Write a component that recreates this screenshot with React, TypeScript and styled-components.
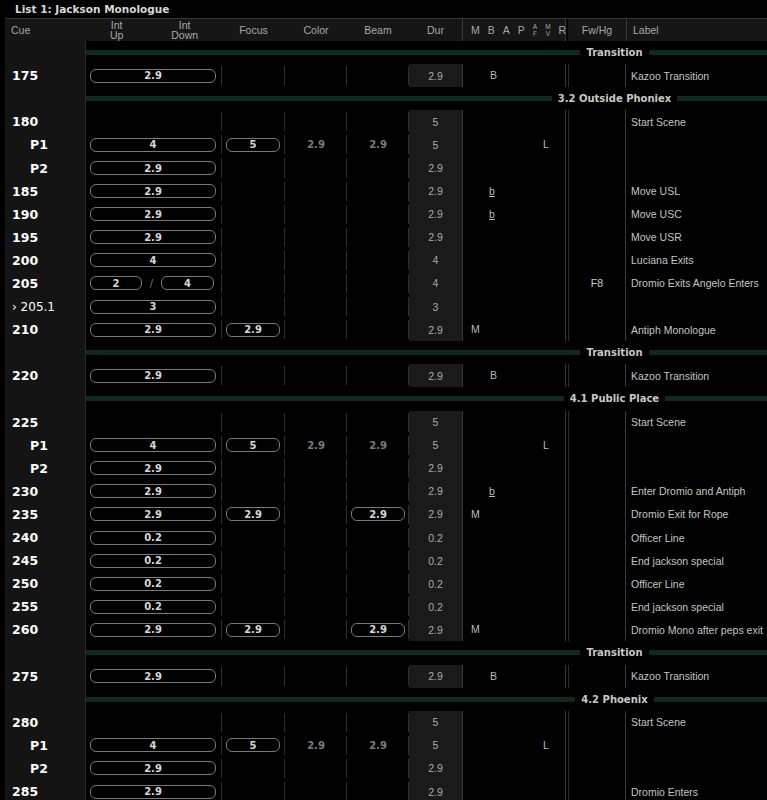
import React from "react";
import styled, { createGlobalStyle } from "styled-components";

const Global = createGlobalStyle`
  html, body { margin: 0; background: #000; }
  body { font-family: "DejaVu Sans", "Noto Sans", sans-serif; color: #ccc; }
`;

const COLS = "81px 136px 63px 62px 62px 53px 106px 58px 1fr";
const SANS = `"Liberation Sans", Arial, sans-serif`;

const Page = styled.div`
  width: 767px; height: 800px; overflow: hidden; background: #000;
`;
const Title = styled.div`
  height: 18px; padding-left: 15px; font-size: 10.5px; font-weight: bold; color: #d8d8d8;
  display: flex; align-items: center;
`;
const Table = styled.div`
  margin-left: 5px; border-top: 1px solid #333;
`;
const Row = styled.div<{ $h?: number }>`
  display: grid; grid-template-columns: ${COLS}; height: ${p => p.$h ?? 23.1}px;
`;
const HeadCell = styled.div<{ $left?: boolean; $line?: boolean }>`
  background: #161616; color: #a8a8a8; font-size: 10.5px; line-height: 10px; font-family: ${SANS};
  display: flex; align-items: center; justify-content: ${p => (p.$left ? "flex-start" : "center")};
  text-align: center; padding-left: ${p => (p.$left ? "6px" : "0")};
  border-left: ${p => (p.$line ? "1px solid #3a3a3a" : "none")};
`;
const CueCell = styled.div<{ $sub?: boolean; $plain?: boolean }>`
  background: #141414; border-right: 1px solid #2a2a2a; color: #fff;
  font-size: ${p => (p.$plain ? "12px" : "12.5px")}; font-weight: ${p => (p.$plain ? "normal" : "bold")};
  display: flex; align-items: center; padding-left: ${p => (p.$sub ? "25px" : "7px")};
`;
const Cell = styled.div<{ $sep?: boolean }>`
  display: flex; align-items: center; position: relative; padding: 0 4px;
  &::after {
    content: ""; display: ${p => (p.$sep ? "block" : "none")}; position: absolute; right: 0; top: 2px; bottom: 2px;
    border-right: 1px solid #2f2f2f;
  }
`;
const DurCell = styled.div`
  background: #1a1a1a; color: #aaa; font-size: 10.5px; font-family: ${SANS};
  display: flex; align-items: center; justify-content: center;
`;
const FlagCell = styled.div`
  border-left: 1px solid #3a3a3a; border-right: 1px solid #3a3a3a; margin-right: 2px;
  position: relative; color: #bbb; font-size: 10.5px; font-family: ${SANS};
`;
const Flag = styled.span<{ $x: number; $u?: boolean }>`
  position: absolute; left: ${p => p.$x}px; top: 5px; text-decoration: ${p => (p.$u ? "underline" : "none")};
`;
const FwCell = styled.div`
  border-left: 1px solid #2a2a2a; border-right: 1px solid #3a3a3a; color: #ccc; font-size: 10.5px; font-family: ${SANS};
  display: flex; align-items: center; justify-content: center;
`;
const LabelCell = styled.div`
  color: #c4c4c4; font-size: 10.5px; font-family: ${SANS}; white-space: nowrap; overflow: hidden;
  display: flex; align-items: center; padding-left: 5px;
`;
const Pill = styled.div<{ $w: string }>`
  width: ${p => p.$w}; height: 14px; border: 1px solid #7a7a7a; border-radius: 6px; box-sizing: border-box;
  color: #d8d8d8; font-size: 10px; font-weight: bold; display: flex; align-items: center; justify-content: center;
`;
const Slash = styled.span`
  color: #777; font-size: 10px; flex: 1; text-align: center;
`;
const Plain = styled.div`
  width: 100%; text-align: center; color: #7c7c7c; font-size: 10px; font-weight: bold;
`;
const SectionBar = styled.div`
  grid-column: 2 / 7; display: flex; align-items: center;
`;
const SectionRight = styled.div`
  grid-column: 7 / 10; display: flex; align-items: center; gap: 6px;
`;
const Bar = styled.div`
  flex: 1; height: 5px; background: #0e2a1d;
`;
const SecText = styled.span`
  color: #c8c8c8; font-size: 10px; font-weight: bold; white-space: nowrap;
`;

type Cue = {
  cue: string; sub?: boolean; plain?: boolean;
  up?: string; split?: [string, string]; focus?: string; color?: string; beam?: string; beamPill?: string;
  dur: string; flags?: { t: string; x: number; u?: boolean }[]; fw?: string; label?: string;
};
type Item = Cue | { section: string };

const B = [{ t: "B", x: 27 }];
const M = [{ t: "M", x: 8 }];
const L = [{ t: "L", x: 80 }];
const b = [{ t: "b", x: 26, u: true }];

const items: Item[] = [
  { section: "Transition" },
  { cue: "175", up: "2.9", dur: "2.9", flags: B, label: "Kazoo Transition" },
  { section: "3.2 Outside Phoniex" },
  { cue: "180", dur: "5", label: "Start Scene" },
  { cue: "P1", sub: true, up: "4", focus: "5", color: "2.9", beam: "2.9", dur: "5", flags: L },
  { cue: "P2", sub: true, up: "2.9", dur: "2.9" },
  { cue: "185", up: "2.9", dur: "2.9", flags: b, label: "Move USL" },
  { cue: "190", up: "2.9", dur: "2.9", flags: b, label: "Move USC" },
  { cue: "195", up: "2.9", dur: "2.9", label: "Move USR" },
  { cue: "200", up: "4", dur: "4", label: "Luciana Exits" },
  { cue: "205", split: ["2", "4"], dur: "4", fw: "F8", label: "Dromio Exits Angelo Enters" },
  { cue: "› 205.1", plain: true, up: "3", dur: "3" },
  { cue: "210", up: "2.9", focus: "2.9", dur: "2.9", flags: M, label: "Antiph Monologue" },
  { section: "Transition" },
  { cue: "220", up: "2.9", dur: "2.9", flags: B, label: "Kazoo Transition" },
  { section: "4.1 Public Place" },
  { cue: "225", dur: "5", label: "Start Scene" },
  { cue: "P1", sub: true, up: "4", focus: "5", color: "2.9", beam: "2.9", dur: "5", flags: L },
  { cue: "P2", sub: true, up: "2.9", dur: "2.9" },
  { cue: "230", up: "2.9", dur: "2.9", flags: b, label: "Enter Dromio and Antiph" },
  { cue: "235", up: "2.9", focus: "2.9", beamPill: "2.9", dur: "2.9", flags: M, label: "Dromio Exit for Rope" },
  { cue: "240", up: "0.2", dur: "0.2", label: "Officer Line" },
  { cue: "245", up: "0.2", dur: "0.2", label: "End jackson special" },
  { cue: "250", up: "0.2", dur: "0.2", label: "Officer Line" },
  { cue: "255", up: "0.2", dur: "0.2", label: "End jackson special" },
  { cue: "260", up: "2.9", focus: "2.9", beamPill: "2.9", dur: "2.9", flags: M, label: "Dromio Mono after peps exit" },
  { section: "Transition" },
  { cue: "275", up: "2.9", dur: "2.9", flags: B, label: "Kazoo Transition" },
  { section: "4.2 Phoenix" },
  { cue: "280", dur: "5", label: "Start Scene" },
  { cue: "P1", sub: true, up: "4", focus: "5", color: "2.9", beam: "2.9", dur: "5", flags: L },
  { cue: "P2", sub: true, up: "2.9", dur: "2.9" },
  { cue: "285", up: "2.9", dur: "2.9", label: "Dromio Enters" },
];

const CueRow = ({ c }: { c: Cue }) => (
  <Row>
    <CueCell $sub={c.sub} $plain={c.plain}>{c.cue}</CueCell>
    <Cell $sep>
      {c.up && <Pill $w="126px">{c.up}</Pill>}
      {c.split && (<><Pill $w="52px">{c.split[0]}</Pill><Slash>/</Slash><Pill $w="53px">{c.split[1]}</Pill><span style={{ width: 4 }} /></>)}
    </Cell>
    <Cell $sep>{c.focus && <Pill $w="54px">{c.focus}</Pill>}</Cell>
    <Cell $sep>{c.color && <Plain>{c.color}</Plain>}</Cell>
    <Cell $sep>
      {c.beam && <Plain>{c.beam}</Plain>}
      {c.beamPill && <Pill $w="54px">{c.beamPill}</Pill>}
    </Cell>
    <DurCell>{c.dur}</DurCell>
    <FlagCell>{c.flags?.map((f, i) => <Flag key={i} $x={f.x} $u={f.u}>{f.t}</Flag>)}</FlagCell>
    <FwCell>{c.fw}</FwCell>
    <LabelCell>{c.label}</LabelCell>
  </Row>
);

const FlagHead = styled.div`
  background: #161616; border-left: 1px solid #3a3a3a; border-right: 1px solid #3a3a3a; margin-right: 2px;
  display: flex; align-items: center; gap: 8px; padding-left: 8px; color: #a8a8a8; font-size: 10.5px; font-family: ${SANS};
`;
const Tiny = styled.span`
  display: flex; flex-direction: column; font-size: 6.5px; line-height: 7px; align-items: center;
`;

export default function App() {
  return (
    <Page>
      <Global />
      <Title>List 1: Jackson Monologue</Title>
      <Table>
        <Row $h={22}>
          <HeadCell $left>Cue</HeadCell>
          <HeadCell style={{ justifyContent: "space-around" }}><span>Int<br />Up</span><span>Int<br />Down</span></HeadCell>
          <HeadCell>Focus</HeadCell>
          <HeadCell>Color</HeadCell>
          <HeadCell>Beam</HeadCell>
          <HeadCell>Dur</HeadCell>
          <FlagHead><span>M</span><span>B</span><span>A</span><span>P</span><Tiny><span>A</span><span>F</span></Tiny><Tiny><span>M</span><span>V</span></Tiny><span>R</span></FlagHead>
          <HeadCell>Fw/Hg</HeadCell>
          <HeadCell $left $line>Label</HeadCell>
        </Row>
        {items.map((it, i) =>
          "section" in it ? (
            <Row key={i}>
              <CueCell />
              <SectionBar><Bar /></SectionBar>
              <SectionRight><Bar /><SecText>{it.section}</SecText><Bar /></SectionRight>
            </Row>
          ) : (
            <CueRow key={i} c={it} />
          )
        )}
      </Table>
    </Page>
  );
}
